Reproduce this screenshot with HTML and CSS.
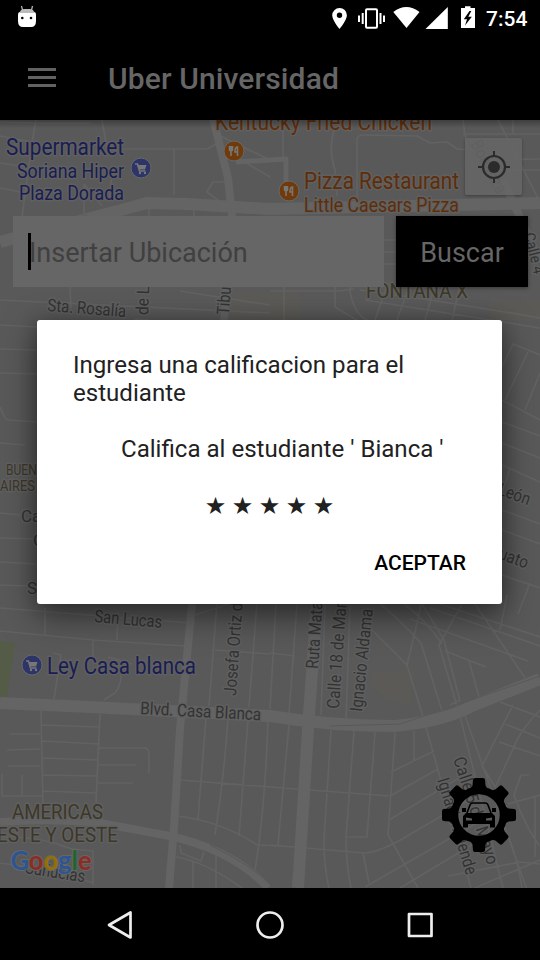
FILE: index.html
```html
<!DOCTYPE html>
<html lang="es">
<head>
<meta charset="utf-8">
<title>Uber Universidad</title>
<link rel="stylesheet" href="styles.css">
</head>
<body>
<div class="screen">
  <header class="status">
    <svg class="droid" width="20" height="24" viewBox="0 0 20 24"><path d="M4.500 1l1 4M15.500 1l-1 4" stroke="#bbb" stroke-width="1.200"/><path d="M1 10q0-3 2-3h14q2 0 2 3v6q0 6-5 6H6q-5 0-5-6z" fill="#fff"/><path d="M2.500 8Q3.500 4 7 4h6q3.500 0 4.500 4z" fill="#bbb"/><circle cx="5.300" cy="13" r="1.300"/><circle cx="14" cy="13" r="1.300"/></svg>
    <svg class="tray" width="150" height="26" viewBox="330 6 150 26" fill="#fff">
      <path fill-rule="evenodd" d="M339.500 8a7.300 7.300 0 0 0-7.300 7.300c0 5.200 7.300 13.700 7.300 13.700s7.400-8.500 7.400-13.700A7.300 7.300 0 0 0 339.500 8zm0 4.600a2.700 2.700 0 1 1 0 5.400 2.700 2.700 0 0 1 0-5.400z"/>
      <rect x="366" y="9.300" width="11" height="18.400" rx="1" fill="none" stroke="#fff" stroke-width="2"/>
      <path d="M358 15.500h2v6.500h-2zM361.700 13h2v11h-2zM379.500 13h2v11h-2zM383 15.500h2v6.500h-2z"/>
      <path d="M393.300 12q13-10 26.200 0L406.500 28z"/>
      <path d="M447.800 7v22H425.500z"/>
      <path fill-rule="evenodd" d="M465 6.300h5.500V8h4.500v20H461V8h4zM469.500 11l-5.700 8.200h3.200l-2 6.300 6.800-8.700h-3.500l3-5.800z"/>
    </svg>
    <span class="clock">7:54</span>
  </header>
  <div class="appbar">
    <div class="burger"><i></i><i></i><i></i></div>
    <h1>Uber Universidad</h1>
  </div>
  <main class="content">
    <svg class="map" width="540" height="768" viewBox="0 120 540 768">
      <rect y="120" width="540" height="768" fill="#595959"/>
      <path d="M0 641l15 2-8 54H0z" fill="#545c47"/>
      <path d="M230 292h70v28h-70zM375 672l40-3-5 35-18-2-25-18zM490 300h50v20h-50z" fill="#5b5a56"/>
      <g class="roads">
        <path class="r1" d="M36 120l-4 23-10 74M0 122q50 2 91 1M0 136l32 6M0 163l28 4M0 188l26 5M102 120l5 28M123 149h84l11-6M174 149v46M113 166l-4 35M84 184v33M84 184l18 22M149 198v18M194 206v10M216 145l54 32M218 135l52 25M228 182h-15l-6 10 12 9M283 120v38M334 130q-6 20 1 40l2 26M357 200v-60q0-5 7-5l53 1 13 7 17-1 10 7 20 1M463 134h77M463 120q5 42 18 62M498 120l42 82M513 120v14M483 160l57-1M500 170h40M70 287l1 21M0 300l270 13M180 291l90 14M270 291h70l14-2M284 287v34M335 287v20l25 15M350 270v22q5 25 20 29M388 283l-13 37M410 284l-13 36M435 285l-10 35M460 285l-8 35M360 290q90 12 180 28M365 300l175 28M384 240h12M384 252h12M384 264h12"/>
        <path class="r1" d="M0 325l37 2M0 349l37 1M0 373l37 1M0 407q5 13 8 13l29 2M0 443l25 2M0 513l20 2M0 538l37 1M0 562l37 2M0 585l28 1M0 608l190 15M502 367l11-23 27 11M505 400l23-48M525 410l15-37M502 400l38 20M502 422l38 14M502 443l38 15M502 465l38 17M510 469l-9 26M502 510l38 14M502 530l38 14M502 575l38 13M530 583l-12 31"/>
        <path class="r1" d="M0 631l93 9 92 6M45 608v27M118 612l-1 28M93 640v17M53 653l8 2-7 44M122 665q0 20-7 28l-11 7M108 657l24 7M195 615l43-14M217 602l-8 104M257 602l-8 105M215 650l55 4M41 711l2 94M100 714l-4 88M42 725l57 2M42 741l57 3M42 758l56 2M42 775l55 1M42 791l54 2M10 734h30M7 750l33-1M8 766h32M2 774v22h40M22 775v21M98 748h45q6 0 6 5v20M98 765h38M98 783h35M180 780l90 7M206 718l-8 101M228 718q-4 60-13 117M248 720l-9 116M268 720q-3 90-13 150M178 816q45 6 79 29l25 1M0 837q36-2 72 12l21 2v34M0 863q45 5 94 20M176 857q30 5 66 31M193 862v26M216 855v33M180 845l1 8 20 8 3-9"/>
        <path class="r1" d="M276 604l-6 105M297 604l-8 110M270 653l25 3M325 605l-4 110M350 605l-4 115M360 618l47 47M380 604q22 18 41 39l21 68M407 665l15 48 49 175M421 604l-5 24-9 37M404 604q22 16 38 40M410 619l118 42M422 604l22 36 16 61M430 608l110 38M440 604l100 33M462 604l-23 41 22 75 42 168M445 651l41 16M469 661l10 36M475 604l50 74M507 595l-7 35M289 725l-11 120M331 730q-4 60-7 110 0 28 5 48M354 731l-8 107q0 25 5 50M375 732l-8 105M395 733l-7 102 30 53M270 787l119 9M270 845l94 8q15 0 45-18l65-38M346 837h22M363 853l6 30M414 731v29M391 772l43-21M390 796l48-27M389 820l75-45M365 887l110-63M400 888l95-57M465 716l75 210M450 705l10-5M500 702l40 15M513 705l-31 61 15 24M540 710q-15 15-23 30l-22 48M505 724l35 14M499 742l41 14M508 804l32-9M529 775h-8l-7 20q12 33 25 50M535 797v60M448 876l72-14 20 2M475 888l65-28M508 835q10 25 14 53"/>
        <path class="r3" d="M0 242l65-17 82-22 40 1 83 5 270-6"/>
        <path class="r2" d="M213 118l5 20 10 40 4 37-8 106M192 604l-12 125-6 98-5 61M503 180l37 82"/>
        <path class="r2 slim" d="M236 162l50-3v25"/>
        <path class="r3" d="M317 604l-8 110-11 174M0 703l90 4 180 9q60 10 125 10 50-5 77-20l68-27"/>
        <path class="r2" d="M0 822q50-4 100 1l70 13q65 15 98 52"/>
        <path d="M330 726l70-2 60-20 80-28M210 845q42 20 64 43" fill="none" stroke="#595959"/>
      </g>
      <g class="lb poi">
        <text x="6" y="154.500" font-size="23" textLength="118" lengthAdjust="spacingAndGlyphs">Supermarket</text>
        <text x="17" y="177.500" font-size="20" textLength="107" lengthAdjust="spacingAndGlyphs">Soriana Hiper</text>
        <text x="19" y="199.500" font-size="20" textLength="105" lengthAdjust="spacingAndGlyphs">Plaza Dorada</text>
        <text x="47" y="673.500" font-size="23" textLength="149" lengthAdjust="spacingAndGlyphs">Ley Casa blanca</text>
      </g>
      <g class="lb food">
        <text x="215" y="130" font-size="23" textLength="217" lengthAdjust="spacingAndGlyphs">Kentucky Fried Chicken</text>
        <text x="304" y="188.500" font-size="23" textLength="155" lengthAdjust="spacingAndGlyphs">Pizza Restaurant</text>
        <text x="304" y="211.500" font-size="20" textLength="155" lengthAdjust="spacingAndGlyphs">Little Caesars Pizza</text>
      </g>
      <g class="lb area">
        <text x="366" y="298" font-size="20" textLength="102" lengthAdjust="spacingAndGlyphs">FONTANA X</text>
        <text x="6" y="475" font-size="14.500" textLength="39" lengthAdjust="spacingAndGlyphs">BUENO</text>
        <text x="0" y="491" font-size="14.500" textLength="35" lengthAdjust="spacingAndGlyphs">AIRES</text>
        <text x="12" y="818.500" font-size="20" textLength="91" lengthAdjust="spacingAndGlyphs">AMERICAS</text>
        <text x="-3" y="841.500" font-size="20" textLength="121" lengthAdjust="spacingAndGlyphs">ESTE Y OESTE</text>
      </g>
      <g class="lb street" font-size="17.500">
        <text transform="translate(47 311) rotate(4.500)" textLength="79" lengthAdjust="spacingAndGlyphs">Sta. Rosalía</text>
        <text transform="translate(148 323) rotate(-88)" textLength="37" lengthAdjust="spacingAndGlyphs">l de L</text>
        <text transform="translate(229 315) rotate(-86)" textLength="28" lengthAdjust="spacingAndGlyphs">Tibu</text>
        <text transform="translate(94 622) rotate(5)" textLength="68" lengthAdjust="spacingAndGlyphs">San Lucas</text>
        <text transform="translate(140 714) rotate(3)" textLength="121" lengthAdjust="spacingAndGlyphs">Blvd. Casa Blanca</text>
        <text transform="translate(236 696) rotate(-86)" textLength="93" lengthAdjust="spacingAndGlyphs">Josefa Ortiz d</text>
        <text transform="translate(318 669) rotate(-86)" textLength="67" lengthAdjust="spacingAndGlyphs">Ruta Mata</text>
        <text transform="translate(339 709) rotate(-86)" textLength="106" lengthAdjust="spacingAndGlyphs">Calle 18 de Mar</text>
        <text transform="translate(362 712) rotate(-84)" textLength="103" lengthAdjust="spacingAndGlyphs">Ignacio Aldama</text>
        <text x="21" y="522" font-size="17">Cal</text><text x="33" y="546" font-size="17">Ce</text><text x="27" y="594" font-size="17">Sa</text>
        <text transform="translate(497 494) rotate(20)" textLength="33" lengthAdjust="spacingAndGlyphs">León</text>
        <text transform="translate(494 557) rotate(20)" textLength="34" lengthAdjust="spacingAndGlyphs">juato</text>
        <text transform="translate(453 759) rotate(72)" textLength="112" lengthAdjust="spacingAndGlyphs">Calle 5 de Mayo</text>
        <text transform="translate(437 780) rotate(73)" textLength="100" lengthAdjust="spacingAndGlyphs">Ignacio Allende</text>
        <text transform="translate(524 234) rotate(76)" font-size="15" textLength="42" lengthAdjust="spacingAndGlyphs">Calle 4</text>
        <text transform="translate(470 144) rotate(62)" textLength="58" opacity=".6" lengthAdjust="spacingAndGlyphs">Bonanza</text>
        <text transform="translate(24 873) rotate(9)" textLength="61" lengthAdjust="spacingAndGlyphs">Cañuelas</text>
        <text x="82" y="223" font-size="13">r</text>
      </g>
      <g transform="translate(141 168)"><circle r="10" class="pin blue"/><path class="cart" d="M-6-4h2.500l2 7h6"/><path d="M-3.500-3h9L4 1.500h-6z" fill="#777"/><circle cx="-1" cy="5" r="1.200" fill="#777"/><circle cx="4" cy="5" r="1.200" fill="#777"/></g>
      <g transform="translate(32 665)"><circle r="10" class="pin blue"/><path class="cart" d="M-6-4h2.500l2 7h6"/><path d="M-3.500-3h9L4 1.500h-6z" fill="#777"/><circle cx="-1" cy="5" r="1.200" fill="#777"/><circle cx="4" cy="5" r="1.200" fill="#777"/></g>
      <g transform="translate(234 151)"><circle r="10" class="pin orange"/><path class="fork" d="M-4.500-5v3q0 2 1.500 2t1.500-2v-3M-3-5V5M3.500 5V-4Q1-4 1 1h2"/></g>
      <g transform="translate(289 191)"><circle r="10" class="pin orange"/><path class="fork" d="M-4.500-5v3q0 2 1.500 2t1.500-2v-3M-3-5V5M3.500 5V-4Q1-4 1 1h2"/></g>
      <text class="google" x="10.500" y="869.500" textLength="81" lengthAdjust="spacingAndGlyphs"><tspan fill="#2d5593">G</tspan><tspan fill="#8c2c24">o</tspan><tspan fill="#957000">o</tspan><tspan fill="#2d5593">g</tspan><tspan fill="#20652f">l</tspan><tspan fill="#8c2c24">e</tspan></text>
    </svg>
    <div class="tools"><button class="locate" aria-label="Mi ubicación"><svg width="34" height="34" viewBox="-17 -17 34 34"><circle r="11" fill="none" stroke="#2b2b2b" stroke-width="2.200"/><circle r="6" fill="#2b2b2b"/><path d="M-16 0h5M11 0h5M0-16v5M0 11v5" stroke="#2b2b2b" stroke-width="2"/></svg></button></div>
    <div class="search"><div class="field"><span class="caret"></span><span class="hint">Insertar Ubicación</span></div><button class="go">Buscar</button></div>
    <div class="fab">
      <svg width="74" height="74" viewBox="-37 -37 74 74">
        <defs><path id="t" d="M-11-22l4.500-7.500 .5-6Q-5.500-37-4-37h8Q5.500-37 6-35.500l.5 6L11-22z"/></defs>
        <circle r="24.500" fill="none" stroke="#000" stroke-width="7.500"/>
        <use href="#t"/><use href="#t" transform="rotate(45)"/><use href="#t" transform="rotate(90)"/><use href="#t" transform="rotate(135)"/><use href="#t" transform="rotate(180)"/><use href="#t" transform="rotate(225)"/><use href="#t" transform="rotate(270)"/><use href="#t" transform="rotate(315)"/>
        <path d="M-12-2l3-8q.5-2 3-2H6q2.500 0 3 2l3 8" fill="none" stroke="#000" stroke-width="1.600"/>
        <path fill-rule="evenodd" d="M-17-7h4v4h-4zM13-7h4v4h-4zM-13-2h26l3 3v11.500h-5V9h-22v3.500h-5V1zM-13 2.500v3h6v-2zM13 2.500v3H7v-2z"/>
      </svg>
    </div>
  </main>
  <nav class="nav">
    <svg width="30" height="30" viewBox="-15 -15 30 30"><path d="M10.500-12.500v25L-11 0z"/></svg>
    <svg width="30" height="30" viewBox="-15 -15 30 30"><circle r="12.500"/></svg>
    <svg width="30" height="30" viewBox="-15 -15 30 30"><rect x="-11" y="-11" width="22.500" height="22"/></svg>
  </nav>
  <div class="overlay">
    <section class="dialog" role="dialog">
      <p class="title">Ingresa una calificacion para el<br>estudiante</p>
      <p class="message">Califica al estudiante ' Bianca '</p>
      <div class="stars"><span>★</span><span>★</span><span>★</span><span>★</span><span>★</span></div>
      <button class="accept">ACEPTAR</button>
    </section>
  </div>
</div>
</body>
</html>
```
FILE: styles.css
```css
* { box-sizing: border-box; }
body { margin: 0; background: #000; font-family: Roboto, sans-serif; }
button { border: 0; padding: 0; font: inherit; }
.screen { position: relative; width: 540px; height: 960px; display: flex; flex-direction: column; overflow: hidden; }
.status { height: 36px; display: flex; align-items: center; padding: 0 12px 0 17px; color: #fff; }
.droid { margin-top: -2px; fill: #000; }
.tray { margin-left: auto; margin-top: 1px; }
.clock { width: 42px; margin-left: 6px; font-size: 21px; font-weight: 500; line-height: 36px; white-space: nowrap; padding-top: 1px; }
.appbar { height: 84px; display: flex; align-items: center; padding-left: 28px; }
.burger { width: 28px; display: grid; gap: 5px; margin-top: -1px; }
.burger i { height: 3px; background: #626262; }
.appbar h1 { margin: 1px 0 0 52px; font-size: 30px; letter-spacing: .12px; font-weight: 500; color: #666; }
.content { position: relative; height: 768px; display: flex; flex-direction: column; overflow: hidden; }
.content::before { content: ""; position: absolute; z-index: 1; top: 0; width: 100%; height: 8px; background: linear-gradient(rgba(0,0,0,.3), transparent); }
.map { position: absolute; top: 0; left: 0; }
.roads path { stroke-linejoin: round; }
.r1, .r2, .r3 { fill: none; stroke: #646464; }
.r1 { stroke-width: 1.700; stroke: #626262; }
.r2 { stroke-width: 8; }
.slim { stroke-width: 5; }
.r3 { stroke-width: 12; }
.lb { paint-order: stroke; stroke: #606060; stroke-width: 3px; stroke-linejoin: round; }
.lb text { font-family: Roboto, sans-serif; }
.poi { fill: #191d53; }
.food { fill: #5f2d08; }
.area { fill: #3d3728; }
.street { fill: #333; }
.pin { stroke: #686868; stroke-width: 1; }
.blue { fill: #2d3468; }
.orange { fill: #703a0b; }
.cart, .fork { fill: none; stroke: #777; stroke-width: 1.600; }
.google { font: 700 27px Lato, sans-serif; paint-order: stroke; stroke: #666; stroke-width: 2px; }
.tools { position: relative; display: flex; justify-content: flex-end; padding: 18px 18px 0 0; }
.locate { width: 57px; height: 57px; display: grid; place-items: center; border-radius: 2px; background: rgba(102,102,102,.82); box-shadow: 0 1px 3px rgba(0,0,0,.3); }
.search { position: relative; display: flex; gap: 12px; margin: 21px 12px 0 13px; height: 71px; }
.field { width: 371px; display: flex; align-items: center; padding-left: 15px; background: #666; }
.caret { width: 3px; height: 37px; background: #000; }
.hint { margin: 2px 0 0 -2px; font-size: 27px; color: #404040; }
.go { flex: 1; background: #000; color: #666; font-size: 27px; padding-top: 2px; box-shadow: 0 1px 4px rgba(0,0,0,.4); }
.fab { position: relative; margin: auto 24px 36px auto; width: 74px; height: 74px; }
.nav { height: 72px; display: grid; grid-template-columns: repeat(3, 150px); justify-content: center; place-items: center; padding-top: 1px; }
.nav svg { fill: none; stroke: #eee; stroke-width: 2.700; stroke-linejoin: round; }
.overlay { position: absolute; inset: 36px 0 72px; display: flex; align-items: center; padding-left: 37px; }
.dialog { width: 465px; height: 284px; padding: 31px 36px 0; background: #fff; border-radius: 3px; color: #212121; box-shadow: 0 12px 34px rgba(0,0,0,.5), 0 0 18px rgba(0,0,0,.2); display: flex; flex-direction: column; font-size: 24.080px; line-height: 28px; }
.dialog p { margin: 0; white-space: nowrap; }
.message { padding: 28px 0 0 48px; }
.stars { display: grid; grid-template-columns: repeat(5, 27px); justify-content: center; margin-top: 29px; text-align: center; font: 24px/28px "DejaVu Sans", sans-serif; }
.accept { align-self: flex-end; margin-top: 29px; background: none; color: #000; font-size: 21px; font-weight: 500; line-height: 28px; }
```
